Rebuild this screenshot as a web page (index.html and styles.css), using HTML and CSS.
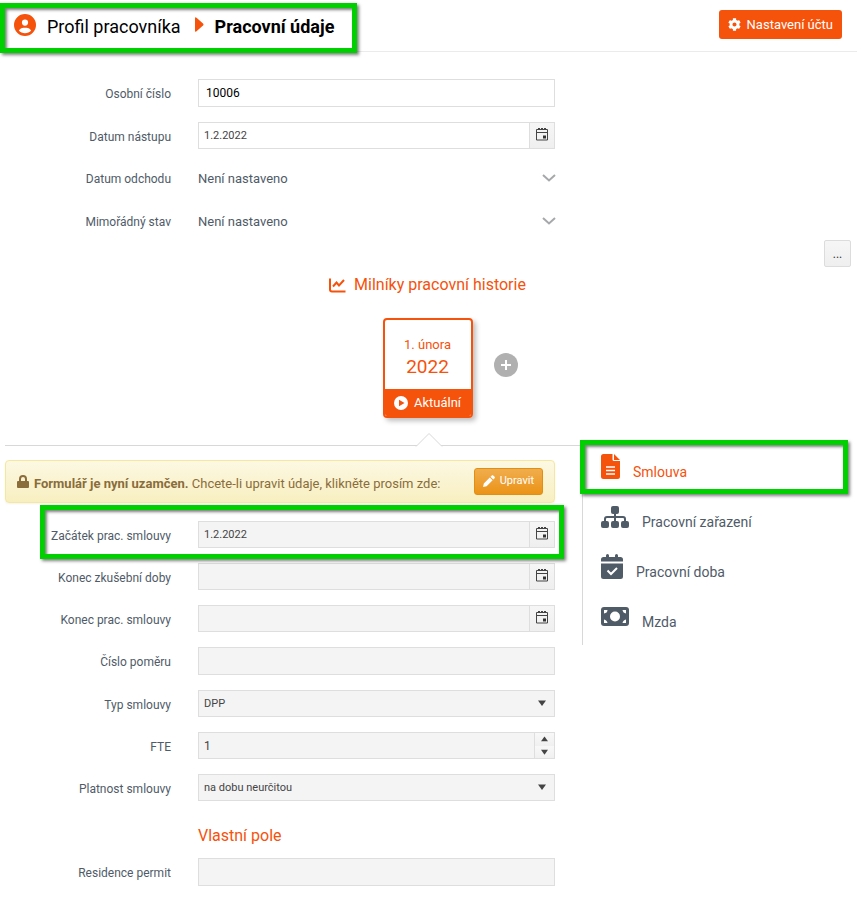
FILE: index.html
```
<!doctype html>
<html lang="cs">
    <head>
        <meta charset="UTF-8" />
        <title>Profil pracovníka - Pracovní údaje</title>
        <link rel="stylesheet" href="styles.css">
    </head>
    <body>
        <!-- Shared icons -->
        <svg class="sprite" xmlns="http://www.w3.org/2000/svg">
            <symbol id="icon-calendar" viewBox="0 0 14 14">
                <path d="M1.500 2.500h11v10.500h-11zM1.500 5.500h11" fill="none" stroke="#444" />
                <path d="M3 1h2v2h-2zM6 1h2v2h-2zM9 1h2v2h-2z" fill="#444" />
                <path d="M8 8.500h3v3h-3z" fill="#333" />
            </symbol>
            <symbol id="icon-chevron" viewBox="0 0 14 8">
                <path d="M1 1l6 5.500 6-5.500" fill="none" stroke="#a6a8aa" stroke-width="2" />
            </symbol>
            <symbol id="icon-caret" viewBox="0 0 8 6">
                <path d="M0 0.500h8l-4 5.500z" fill="#444" />
            </symbol>
        </svg>

        <header class="header">
            <div class="breadcrumb marked">
                <svg class="icon-user" viewBox="0 0 512 512">
                    <path d="M399 384.2C376.900 345.800 335.400 320 288 320H224c-47.400 0-88.900 25.800-111 64.200c35.200 39.200 86.200 63.800 143 63.800s107.800-24.700 143-63.800zM0 256a256 256 0 1 1 512 0A256 256 0 1 1 0 256zm256 16a72 72 0 1 0 0-144 72 72 0 1 0 0 144z" />
                </svg>
                <a class="crumb" href="#">Profil pracovníka</a>
                <svg class="icon-right" viewBox="0 0 9 15">
                    <path d="M0 1.500q0-2 1.500-0.700l6.500 5.700q1 1 0 2l-6.500 5.700q-1.500 1.300-1.500-0.700z" />
                </svg>
                <h1 class="title">Pracovní údaje</h1>
            </div>
            <button type="button" class="button settings">
                <svg class="icon-gear" viewBox="0 0 512 512">
                    <path d="M487.4 315.700l-42.600-24.600c4.300-23.200 4.300-47 0-70.200l42.600-24.600c4.900-2.800 7.100-8.600 5.500-14-11.100-35.600-30-67.800-54.700-94.600-3.800-4.100-10-5.100-14.800-2.300L380.800 110c-17.900-15.400-38.500-27.300-60.800-35.100V25.800c0-5.600-3.900-10.500-9.400-11.700-36.700-8.200-74.300-7.800-109.200 0-5.500 1.200-9.400 6.100-9.400 11.700V75c-22.200 7.900-42.800 19.800-60.800 35.100L88.700 85.500c-4.900-2.800-11-1.900-14.800 2.300-24.700 26.700-43.600 58.900-54.700 94.600-1.700 5.400.6 11.200 5.500 14L67.300 221c-4.300 23.200-4.300 47 0 70.200l-42.600 24.600c-4.900 2.800-7.100 8.600-5.500 14 11.100 35.600 30 67.800 54.700 94.600 3.800 4.100 10 5.100 14.800 2.300l42.600-24.600c17.900 15.400 38.500 27.300 60.800 35.100v49.200c0 5.600 3.900 10.500 9.400 11.700 36.700 8.200 74.300 7.800 109.200 0 5.500-1.200 9.400-6.100 9.400-11.700v-49.200c22.200-7.900 42.800-19.800 60.800-35.100l42.600 24.600c4.900 2.800 11 1.900 14.800-2.300 24.700-26.700 43.600-58.900 54.700-94.600 1.500-5.500-.7-11.300-5.600-14.100zM256 336c-44.100 0-80-35.900-80-80s35.900-80 80-80 80 35.900 80 80-35.900 80-80 80z" />
                </svg>
                Nastavení účtu
            </button>
        </header>

        <!-- Basic data -->
        <form class="form basic">
            <div class="row">
                <label for="personal-number">Osobní číslo</label>
                <input id="personal-number" class="field text" type="text" value="10006" />
            </div>
            <div class="row">
                <label for="start-date">Datum nástupu</label>
                <div class="field">
                    <input id="start-date" type="text" value="1.2.2022" />
                    <button type="button" class="picker" aria-label="Kalendář"><svg><use href="#icon-calendar" /></svg></button>
                </div>
            </div>
            <div class="row">
                <label for="leave-date">Datum odchodu</label>
                <div class="plain">
                    <select id="leave-date"><option>Není nastaveno</option></select>
                    <svg><use href="#icon-chevron" /></svg>
                </div>
            </div>
            <div class="row">
                <label for="special-state">Mimořádný stav</label>
                <div class="plain">
                    <select id="special-state"><option>Není nastaveno</option></select>
                    <svg><use href="#icon-chevron" /></svg>
                </div>
            </div>
        </form>

        <div class="toolbar">
            <button type="button" class="more">...</button>
        </div>

        <!-- Milestones -->
        <section class="history">
            <h2 class="heading">
                <svg class="icon-chart" viewBox="0 0 17 15">
                    <path d="M1 0.500v11q0 2 2 2h13.500M4 8.500l3.500-4 2.500 3 5-5.500" />
                </svg>
                Milníky pracovní historie
            </h2>
            <div class="milestones">
                <a class="milestone" href="#">
                    <span class="day">1. února</span>
                    <span class="year">2022</span>
                    <span class="current">
                        <svg viewBox="0 0 14 14">
                            <circle cx="7" cy="7" r="7" fill="#fff" />
                            <path d="M5 3.700l5.500 3.300-5.500 3.300z" fill="#f5520c" />
                        </svg>
                        Aktuální
                    </span>
                </a>
                <button type="button" class="add" aria-label="Přidat">
                    <svg viewBox="0 0 24 24">
                        <circle cx="12" cy="12" r="12" fill="#b0b0b0" />
                        <path d="M12 7v10M7 12h10" stroke="#fff" stroke-width="2" />
                    </svg>
                </button>
            </div>
            <svg class="pointer" viewBox="0 0 28 14">
                <path d="M1 13.500l13-13 13 13" fill="#fff" stroke="#d8d8d8" />
            </svg>
        </section>

        <main class="detail">
            <form class="locked">
                <div class="alert">
                    <svg class="icon-lock" viewBox="0 0 12 13">
                        <path d="M1 6h10q1 0 1 1v5q0 1-1 1h-10q-1 0-1-1v-5q0-1 1-1z" />
                        <path d="M3 6.500v-2.500a3 3 0 0 1 6 0v2.500" fill="none" stroke="#8a6d3b" stroke-width="2" />
                    </svg>
                    <p><strong>Formulář je nyní uzamčen.</strong> Chcete-li upravit údaje, klikněte prosím zde:</p>
                    <button type="button" class="button edit">
                        <svg viewBox="0 0 12 12">
                            <path d="M0 12l0.800-3.600 6-6 2.800 2.800-6 6zM7.500 1.700l1.300-1.300q0.700-0.700 1.400 0l1.400 1.400q0.700 0.700 0 1.400l-1.300 1.300z" />
                        </svg>
                        Upravit
                    </button>
                </div>

                <div class="form">
                    <div class="row marked">
                        <label for="contract-start">Začátek prac. smlouvy</label>
                        <div class="field">
                            <input id="contract-start" type="text" value="1.2.2022" disabled />
                            <button type="button" class="picker" aria-label="Kalendář" disabled><svg><use href="#icon-calendar" /></svg></button>
                        </div>
                    </div>
                    <div class="row">
                        <label for="trial-end">Konec zkušební doby</label>
                        <div class="field">
                            <input id="trial-end" type="text" disabled />
                            <button type="button" class="picker" aria-label="Kalendář" disabled><svg><use href="#icon-calendar" /></svg></button>
                        </div>
                    </div>
                    <div class="row">
                        <label for="contract-end">Konec prac. smlouvy</label>
                        <div class="field">
                            <input id="contract-end" type="text" disabled />
                            <button type="button" class="picker" aria-label="Kalendář" disabled><svg><use href="#icon-calendar" /></svg></button>
                        </div>
                    </div>
                    <div class="row">
                        <label for="relation-number">Číslo poměru</label>
                        <input id="relation-number" class="field text" type="text" disabled />
                    </div>
                    <div class="row">
                        <label for="contract-type">Typ smlouvy</label>
                        <div class="field">
                            <select id="contract-type" disabled><option>DPP</option></select>
                            <svg class="caret"><use href="#icon-caret" /></svg>
                        </div>
                    </div>
                    <div class="row">
                        <label for="fte">FTE</label>
                        <div class="field">
                            <input id="fte" class="number" type="text" value="1" disabled />
                            <div class="spinner">
                                <button type="button" aria-label="Více" disabled><svg class="up"><use href="#icon-caret" /></svg></button>
                                <button type="button" aria-label="Méně" disabled><svg><use href="#icon-caret" /></svg></button>
                            </div>
                        </div>
                    </div>
                    <div class="row">
                        <label for="validity">Platnost smlouvy</label>
                        <div class="field">
                            <select id="validity" disabled><option>na dobu neurčitou</option></select>
                            <svg class="caret"><use href="#icon-caret" /></svg>
                        </div>
                    </div>
                    <h2 class="heading custom">Vlastní pole</h2>
                    <div class="row">
                        <label for="residence">Residence permit</label>
                        <input id="residence" class="field text" type="text" disabled />
                    </div>
                </div>
            </form>

            <nav class="sections">
                <a class="section active marked" href="#">
                    <svg width="19" height="25" viewBox="0 0 19 25">
                        <path d="M2.500 0h9v5.500q0 1.500 1.500 1.500h6v15.500q0 2.500-2.500 2.500h-14q-2.500 0-2.500-2.500v-20q0-2.500 2.500-2.500zM13 0l6 6h-6z" />
                        <path d="M5 13h9M5 16.500h9M5 20h9" stroke="#fff" stroke-width="1.500" />
                    </svg>
                    Smlouva
                </a>
                <a class="section" href="#">
                    <svg width="28" height="22" viewBox="0 0 28 22">
                        <rect x="10" y="0" width="8" height="8" rx="2" />
                        <rect x="0" y="15" width="8" height="7" rx="2" />
                        <rect x="10" y="15" width="8" height="7" rx="2" />
                        <rect x="20" y="15" width="8" height="7" rx="2" />
                        <path d="M14 7v9M4 16v-3q0-2 2-2h16q2 0 2 2v3" fill="none" stroke="#505b68" stroke-width="2" />
                    </svg>
                    Pracovní zařazení
                </a>
                <a class="section" href="#">
                    <svg width="22" height="25" viewBox="0 0 22 25">
                        <path d="M5 1.500q0-1.500 1.500-1.500t1.500 1.500v1.500h6v-1.500q0-1.500 1.500-1.500t1.500 1.500v1.500h2.500q2.500 0 2.500 2.500v2h-22v-2q0-2.500 2.500-2.500h2.500zM0 9.500h22v13q0 2.500-2.500 2.500h-17q-2.500 0-2.500-2.500z" />
                        <path d="M6.500 16.500l3.500 3.500 6-6" fill="none" stroke="#fff" stroke-width="2" />
                    </svg>
                    Pracovní doba
                </a>
                <a class="section" href="#">
                    <svg width="28" height="19" viewBox="0 0 28 19">
                        <rect width="28" height="19" rx="3" />
                        <circle cx="14" cy="9.500" r="5" fill="#fff" />
                        <path d="M3 3h3.500q0 3-3.500 3.500zM25 3v3.500q-3-0.500-3.500-3.500zM3 16v-3.500q3 0.500 3.500 3.500zM25 16h-3.500q0.500-3 3.500-3.500z" fill="#fff" />
                    </svg>
                    Mzda
                </a>
            </nav>
        </main>
    </body>
</html>
```

FILE: styles.css
```
* {
    box-sizing: border-box;
}

body {
    margin: 0;
    background-color: #fff;
    color: #505b68;
    font-family: Roboto, "Liberation Sans", sans-serif;
    font-size: 12px;
}

button,
input,
select {
    font: inherit;
    color: inherit;
}

h1,
h2,
p {
    margin: 0;
}

a {
    color: inherit;
    text-decoration: none;
}

svg {
    display: block;
    flex-shrink: 0;
}

.sprite {
    display: none;
}

/* Green frame drawn over the important parts */
.marked {
    position: relative;
}

.marked::after {
    content: "";
    position: absolute;
    border: 5px solid #00cf00;
    box-shadow: 2px 2px 3px rgba(0, 0, 0, 0.5), inset 2px 2px 3px rgba(0, 0, 0, 0.5);
    pointer-events: none;
}

/* Header */
.header {
    display: flex;
    align-items: stretch;
    justify-content: space-between;
    height: 52px;
    padding-right: 15px;
    border-bottom: 1px solid #ebebeb;
    color: #000;
    font-size: 18px;
}

.breadcrumb {
    display: flex;
    align-items: center;
    padding: 2px 23px 0 14px;
}

.breadcrumb.marked::after {
    inset: 3px 0 -2px 0;
}

.icon-user {
    width: 22px;
    height: 22px;
    margin: 0 11px 4px 0;
    fill: #f5520c;
}

.icon-right {
    width: 9px;
    height: 15px;
    margin: 0 11px 4px 14px;
    fill: #f5520c;
}

.title {
    font-size: 18px;
    font-weight: 700;
}

.button {
    display: flex;
    align-items: center;
    border-radius: 3px;
    color: #fff;
    cursor: pointer;
}

.settings {
    align-self: flex-start;
    gap: 6px;
    height: 29px;
    margin-top: 10px;
    padding: 0 9px;
    border: none;
    background-color: #f5520c;
    font-size: 13px;
}

.icon-gear {
    width: 13px;
    height: 13px;
    fill: #fff;
}

/* Forms */
.form {
    display: grid;
    gap: 15px;
}

.basic {
    padding: 27px 302px 0 0;
}

.row {
    display: grid;
    grid-template-columns: 171px 1fr;
    column-gap: 27px;
    align-items: center;
}

.row label {
    padding-top: 2px;
    text-align: right;
}

.field {
    display: flex;
    align-items: stretch;
    width: 100%;
    height: 27px;
    border: 1px solid #dedede;
    background-color: #fff;
    color: #444;
    font-size: 11px;
}

.field.text {
    height: 28px;
    padding: 0 7px;
    color: #000;
    font-size: 12px;
}

.field input,
.field select {
    flex: 1;
    min-width: 0;
    padding: 0 5px;
    border: none;
    background: none;
    appearance: none;
    opacity: 1;
}

.field .number {
    font-size: 12px;
}

.locked .field {
    background-color: #f4f4f4;
}

.picker {
    display: flex;
    align-items: center;
    justify-content: center;
    width: 25px;
    padding: 0 0 3px;
    border: none;
    border-left: 1px solid #dedede;
    background: linear-gradient(#f6f6f6, #efefef);
}

.picker svg {
    width: 14px;
    height: 14px;
}

.caret {
    align-self: center;
    width: 8px;
    height: 6px;
    margin: 0 8px 2px 0;
}

.spinner {
    display: flex;
    flex-direction: column;
    width: 20px;
    border-left: 1px solid #dedede;
}

.spinner button {
    display: flex;
    flex: 1;
    align-items: center;
    justify-content: center;
    padding: 0;
    border: none;
    background: linear-gradient(#f8f8f8, #f0f0f0);
}

.spinner svg {
    width: 7px;
    height: 6px;
}

.spinner .up {
    transform: rotate(180deg);
}

.plain {
    display: flex;
    align-items: center;
    height: 28px;
    font-size: 13px;
}

.plain select {
    flex: 1;
    padding: 0;
    border: none;
    background: none;
    appearance: none;
}

.plain svg {
    width: 14px;
    height: 8px;
    margin-right: -1px;
}

.toolbar {
    display: flex;
    justify-content: flex-end;
    padding: 5px 6px 0;
}

.more {
    width: 27px;
    height: 27px;
    padding: 0;
    border: 1px solid #dcdcdc;
    border-radius: 2px;
    background: linear-gradient(#f6f6f6, #efefef);
    color: #333;
}

/* Milestones */
.heading {
    color: #f5520c;
    font-size: 16px;
    font-weight: 400;
    line-height: 20px;
}

.history {
    padding-top: 8px;
}

.history .heading {
    display: flex;
    align-items: center;
    justify-content: center;
    gap: 8px;
    padding-right: 2px;
}

.icon-chart {
    width: 17px;
    height: 15px;
    fill: none;
    stroke: #f5520c;
    stroke-width: 2;
}

.milestones {
    display: grid;
    grid-template-columns: 1fr 90px 1fr;
    column-gap: 21px;
    padding: 23px 2px 15px 0;
}

.milestone {
    display: flex;
    flex-direction: column;
    grid-column: 2;
    height: 100px;
    padding-top: 16px;
    overflow: hidden;
    border: 2px solid #f5520c;
    border-radius: 4px;
    box-shadow: 3px 3px 5px rgba(0, 0, 0, 0.25);
    color: #f5520c;
    text-align: center;
}

.day {
    font-size: 13px;
    line-height: 18px;
}

.year {
    font-size: 19px;
    line-height: 26px;
}

.current {
    display: flex;
    align-items: center;
    justify-content: center;
    gap: 6px;
    height: 27px;
    margin-top: auto;
    background-color: #f5520c;
    color: #fff;
    font-size: 13px;
}

.current svg {
    width: 14px;
    height: 14px;
}

.add {
    align-self: center;
    justify-self: start;
    padding: 0;
    border: none;
    background: none;
}

.add svg {
    width: 24px;
    height: 24px;
    margin-bottom: 7px;
}

.pointer {
    position: relative;
    z-index: 1;
    width: 28px;
    height: 14px;
    margin: 0 auto -2px;
}

/* Contract detail */
.detail {
    display: grid;
    grid-template-columns: 1fr 302px;
    padding-bottom: 16px;
}

.locked {
    margin: 0 -28px 0 5px;
    padding: 14px 28px 0 0;
    border-top: 1px solid #d8d8d8;
}

.locked .form {
    margin: 18px 0 0 -5px;
}

.alert {
    display: flex;
    align-items: center;
    height: 43px;
    padding: 0 11px;
    border: 1px solid #f5e79e;
    border-radius: 4px;
    background: linear-gradient(#fcf8e3, #f8efc0);
    box-shadow: 0 1px 2px rgba(0, 0, 0, 0.05);
    color: #8a6d3b;
    font-size: 13px;
}

.alert p {
    flex: 1;
    padding-top: 4px;
}

.icon-lock {
    width: 12px;
    height: 13px;
    margin-right: 5px;
    fill: #8a6d3b;
}

.edit {
    gap: 5px;
    height: 27px;
    padding: 0 8px 2px;
    border: 1px solid #e38d13;
    background: linear-gradient(#f0ad4e, #eb9316);
    font-size: 11px;
}

.edit svg {
    width: 12px;
    height: 12px;
    fill: #fff;
}

.row.marked::after {
    inset: -16px -9px -11px 40px;
}

.custom {
    margin: 10px 0 -3px 198px;
}

/* Section menu */
.sections {
    align-self: start;
    margin-left: 27px;
    border-left: 1px solid #d8d8d8;
    font-size: 14px;
}

.section {
    display: flex;
    align-items: center;
    gap: 13px;
    height: 50px;
    padding: 3px 0 0 18px;
}

.section svg {
    margin-bottom: 10px;
    fill: currentColor;
}

.section.active {
    color: #f5520c;
}

.section.marked::after {
    inset: -5px 9px 1px -3px;
}
```
